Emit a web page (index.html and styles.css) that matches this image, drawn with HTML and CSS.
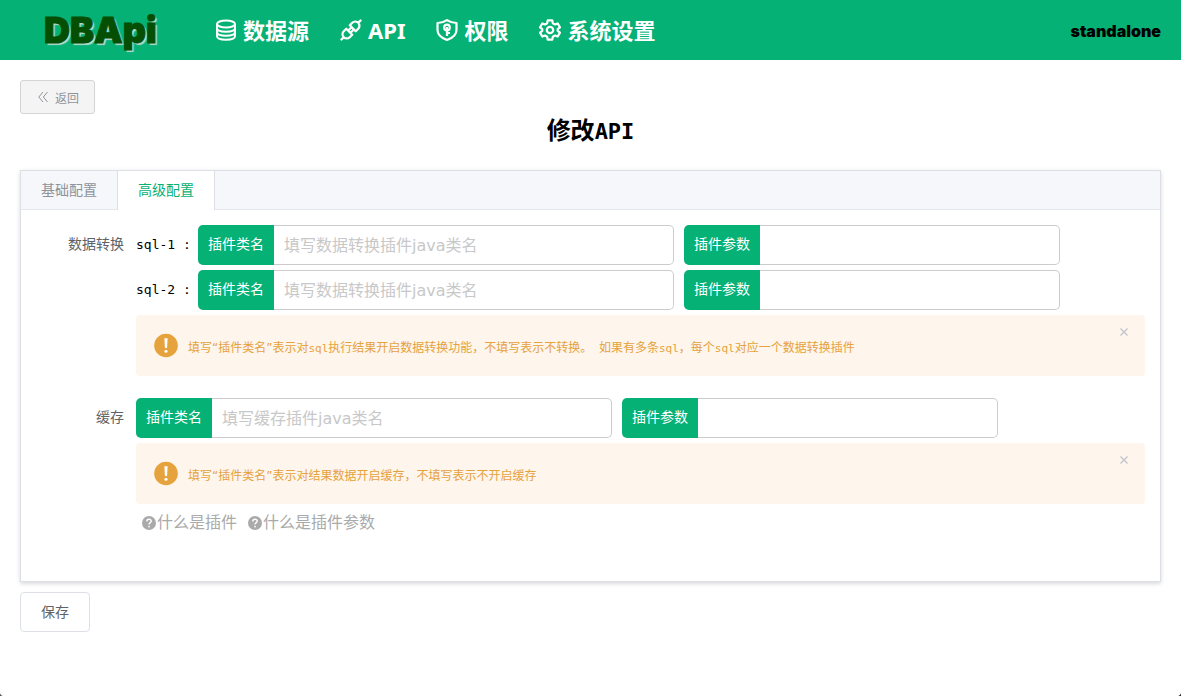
FILE: index.html
```html
<!DOCTYPE html>
<html lang="zh-CN">
<head>
<meta charset="utf-8">
<meta name="viewport" content="width=device-width, initial-scale=1">
<title>DBApi</title>
<link rel="stylesheet" href="styles.css">
</head>
<body>
<header class="topbar">
  <div class="logo">DBApi</div>
  <nav class="nav">
    <a href="#" class="nav-item">
      <svg class="nav-icon" viewBox="0 0 22 22" fill="none" stroke="currentColor" stroke-width="2"><ellipse cx="11" cy="5" rx="9" ry="3.600"/><path d="M2 5v12c0 5 18 5 18 0V5M2 9c0 5 18 5 18 0M2 13c0 5 18 5 18 0"/></svg>
      <span>数据源</span>
    </a>
    <a href="#" class="nav-item">
      <svg class="nav-icon" viewBox="0 0 22 22" fill="none" stroke="currentColor" stroke-width="2.300" stroke-linecap="round" stroke-linejoin="round"><g transform="rotate(-45 11 11)"><path d="M-2.500 11H.5M21.500 11h3M8.500 6.800v8.400H5a4.200 4.200 0 0 1 0-8.400zM13.500 6.800v8.400H17a4.200 4.200 0 0 0 0-8.400zM9 9.400h4M9 12.600h4"/></g></svg>
      <span>API</span>
    </a>
    <a href="#" class="nav-item">
      <svg class="nav-icon" viewBox="0 0 22 22" fill="none" stroke="currentColor" stroke-width="2.200"><path d="M11 1.200c3 2 6 2.800 9.500 2.800v7c0 5-4 8-9.500 10C5.500 19 1.500 16 1.500 11V4C5 4 8 3.200 11 1.200z" stroke-linejoin="round"/><circle cx="11" cy="8.500" r="2.800"/><path d="M11 8v9M11 14h3"/></svg>
      <span>权限</span>
    </a>
    <a href="#" class="nav-item">
      <svg class="nav-icon" viewBox="0 0 24 24" fill="none" stroke="currentColor" stroke-width="2.400" stroke-linejoin="round"><path d="M9.500 1.500h5l.6 3.200 2.300 1.300 3-1.100 2.500 4.200-2.500 2v1.800l2.500 2-2.500 4.200-3-1.100-2.300 1.300-.6 3.200h-5l-.6-3.200L6.600 18l-3 1.100-2.500-4.200 2.500-2v-1.800l-2.500-2 2.500-4.200 3 1.100 2.300-1.300z"/><circle cx="12" cy="12" r="3.500"/></svg>
      <span>系统设置</span>
    </a>
  </nav>
  <div class="mode">standalone</div>
</header>

<main class="page">
  <button type="button" class="back-btn">
    <svg class="back-icon" viewBox="0 0 10 10" fill="none" stroke="currentColor"><path d="M5 0L.8 5 5 10M9.500 0L5.300 5l4.200 5"/></svg>
    <span>返回</span>
  </button>
  <h2 class="title">修改<span class="title-latin">API</span></h2>

  <section class="tabs">
    <div class="tab-bar" role="tablist">
      <button type="button" role="tab" class="tab" aria-selected="false">基础配置</button>
      <button type="button" role="tab" class="tab tab-active" aria-selected="true">高级配置</button>
    </div>
    <div class="tab-body">
      <div class="form-item">
        <div class="form-label">数据转换</div>
        <div class="form-content">
          <div class="plugin-row">
            <span class="sql-name">sql-1 :</span>
            <div class="field field-class"><label class="field-label" for="class1">插件类名</label><input class="field-input" id="class1" type="text" placeholder="填写数据转换插件java类名"></div>
            <div class="field field-param"><label class="field-label" for="param1">插件参数</label><input class="field-input" id="param1" type="text"></div>
          </div>
          <div class="plugin-row">
            <span class="sql-name">sql-2 :</span>
            <div class="field field-class"><label class="field-label" for="class2">插件类名</label><input class="field-input" id="class2" type="text" placeholder="填写数据转换插件java类名"></div>
            <div class="field field-param"><label class="field-label" for="param2">插件参数</label><input class="field-input" id="param2" type="text"></div>
          </div>
          <div class="alert">
            <svg class="alert-icon" viewBox="0 0 25 25"><circle cx="12.500" cy="12.500" r="12.300" fill="currentColor"/><path d="M10.800 5h3.400l-.6 10h-2.200z" fill="#fff"/><circle cx="12.500" cy="18.500" r="1.600" fill="#fff"/></svg>
            <p class="alert-text">填写“插件类名”表示对<span class="mono">sql</span>执行结果开启数据转换功能，不填写表示不转换。<span class="mono"> </span>如果有多条<span class="mono">sql</span>，每个<span class="mono">sql</span>对应一个数据转换插件</p>
            <button type="button" class="alert-close" aria-label="关闭"><svg class="close-icon" viewBox="0 0 8 8" fill="none" stroke="currentColor" stroke-width="1.300"><path d="M.5.5l7 7M7.500.5l-7 7"/></svg></button>
          </div>
        </div>
      </div>

      <div class="form-item">
        <div class="form-label">缓存</div>
        <div class="form-content">
          <div class="plugin-row">
            <div class="field field-class"><label class="field-label" for="class3">插件类名</label><input class="field-input" id="class3" type="text" placeholder="填写缓存插件java类名"></div>
            <div class="field field-param"><label class="field-label" for="param3">插件参数</label><input class="field-input" id="param3" type="text"></div>
          </div>
          <div class="alert">
            <svg class="alert-icon" viewBox="0 0 25 25"><circle cx="12.500" cy="12.500" r="12.300" fill="currentColor"/><path d="M10.800 5h3.400l-.6 10h-2.200z" fill="#fff"/><circle cx="12.500" cy="18.500" r="1.600" fill="#fff"/></svg>
            <p class="alert-text">填写“插件类名”表示对结果数据开启缓存，不填写表示不开启缓存</p>
            <button type="button" class="alert-close" aria-label="关闭"><svg class="close-icon" viewBox="0 0 8 8" fill="none" stroke="currentColor" stroke-width="1.300"><path d="M.5.5l7 7M7.500.5l-7 7"/></svg></button>
          </div>
          <div class="help-links">
            <a href="#" class="help-link"><svg class="help-icon" viewBox="0 0 14 14"><circle cx="7" cy="7" r="7" fill="currentColor"/><path d="M4.900 5.400c0-2.800 4.300-2.700 4.300-.2C9.200 6.700 7 6.700 7 8.500" fill="none" stroke="#fff" stroke-width="1.400"/><circle cx="7" cy="10.600" r=".9" fill="#fff"/></svg>什么是插件</a>
            <a href="#" class="help-link"><svg class="help-icon" viewBox="0 0 14 14"><circle cx="7" cy="7" r="7" fill="currentColor"/><path d="M4.900 5.400c0-2.800 4.300-2.700 4.300-.2C9.200 6.700 7 6.700 7 8.500" fill="none" stroke="#fff" stroke-width="1.400"/><circle cx="7" cy="10.600" r=".9" fill="#fff"/></svg>什么是插件参数</a>
          </div>
        </div>
      </div>
    </div>
  </section>

  <button type="button" class="save-btn">保存</button>
</main>
</body>
</html>
```

FILE: styles.css
```css
* {
  box-sizing: border-box;
}

body {
  margin: 0;
  background: #fff;
  color: #000;
  font-family: "DejaVu Sans", "Noto Sans CJK SC", sans-serif;
  font-size: 14px;
}

/* rounded bottom corners of the window */
body::before,
body::after {
  content: "";
  position: fixed;
  bottom: 0;
  width: 5px;
  height: 5px;
}

body::before {
  left: 0;
  background: radial-gradient(circle at 100% 0, transparent 5px, #555 6px);
}

body::after {
  right: 0;
  background: radial-gradient(circle at 0 0, transparent 5px, #222 6px);
}

button,
input {
  font-family: inherit;
}

button {
  cursor: pointer;
}

svg {
  display: block;
  flex: none;
}

.topbar {
  display: flex;
  align-items: center;
  height: 60px;
  padding: 0 20px 0 44px;
  background: #06b176;
}

.logo {
  width: 171px;
  color: #054f05;
  font-family: Inter, sans-serif;
  font-size: 36px;
  font-weight: 900;
  line-height: 60px;
  -webkit-text-stroke: 1px #054f05;
  text-shadow: 2px 2px 1px #b4dccb;
}

.nav {
  display: flex;
  gap: 31px;
}

.nav-item {
  display: flex;
  align-items: center;
  gap: 6px;
  color: #fff;
  font-family: "Noto Sans", "Noto Sans CJK SC", sans-serif;
  font-size: 22px;
  font-weight: bold;
  line-height: 58px;
  text-decoration: none;
}

.nav-icon {
  width: 22px;
  height: 22px;
}

.mode {
  margin-left: auto;
  padding-top: 2px;
  font-family: Inter, sans-serif;
  font-size: 16px;
  font-weight: 900;
  line-height: 58px;
}

.page {
  padding: 20px;
}

.back-btn {
  display: flex;
  align-items: center;
  gap: 7px;
  height: 34px;
  padding: 0 15px 0 17px;
  border: 1px solid #d3d4d6;
  border-radius: 3px;
  background: #f4f4f5;
  color: #909399;
  font-size: 12px;
}

.back-icon {
  width: 10px;
  height: 10px;
}

.title {
  margin: 0;
  padding: 1px 0 22px;
  font-size: 24px;
  line-height: 33px;
  text-align: center;
}

.title-latin {
  font-family: "DejaVu Sans Mono", monospace;
  font-size: 22px;
}

.tabs {
  border: 1px solid #dcdfe6;
  background: #fff;
  box-shadow: 0 2px 4px rgba(0, 0, 0, 0.12), 0 0 6px rgba(0, 0, 0, 0.04);
}

.tab-bar {
  display: flex;
  height: 39px;
  border-bottom: 1px solid #e4e7ed;
  background: #f5f7fa;
}

.tab {
  height: 39px;
  padding: 0 20px 4px;
  border: 0;
  background: none;
  color: #909399;
  font-size: 14px;
}

.tab-active {
  border-right: 1px solid #dcdfe6;
  border-left: 1px solid #dcdfe6;
  background: #fff;
  color: #06b176;
}

.tab-body {
  padding: 15px 15px 22px;
}

.form-item {
  display: flex;
  margin-bottom: 22px;
}

.form-label {
  flex: none;
  width: 100px;
  padding-right: 12px;
  color: #606266;
  line-height: 38px;
  text-align: right;
}

.form-content {
  flex: 1;
  min-width: 0;
}

.plugin-row {
  display: flex;
  gap: 10px;
  margin-bottom: 5px;
}

.sql-name {
  flex: none;
  width: 52px;
  font-family: "DejaVu Sans Mono", monospace;
  font-size: 13px;
  line-height: 40px;
  white-space: nowrap;
}

.field {
  display: flex;
  height: 40px;
}

.field-class {
  flex: 0 1 476px;
}

.field-param {
  flex: 0 1 376px;
}

.field-label {
  flex: none;
  padding: 0 10px;
  border-radius: 5px 0 0 5px;
  background: #06b176;
  color: #fff;
  line-height: 38px;
}

.field-input {
  flex: 1;
  min-width: 0;
  padding: 0 10px;
  border: 1px solid #ccc;
  border-left: 0;
  border-radius: 0 5px 5px 0;
  background: #fff;
  font-size: 16px;
  outline: none;
}

.field-input::placeholder {
  color: #c8c8c8;
}

.alert {
  display: flex;
  align-items: center;
  height: 61px;
  padding: 0 16px 0 18px;
  border-radius: 4px;
  background: #fef5ec;
  color: #e6a23c;
}

.alert-icon {
  width: 24px;
  height: 25px;
}

.alert-text {
  flex: 1;
  margin: 5px 10px 0;
  font-size: 12px;
  line-height: 18px;
}

.mono {
  font-family: "DejaVu Sans Mono", monospace;
  font-size: 11px;
  white-space: pre;
}

.alert-close {
  align-self: flex-start;
  margin-top: 12px;
  padding: 1px;
  border: 0;
  background: none;
  color: #c0c4cc;
}

.close-icon {
  width: 8px;
  height: 8px;
}

.help-links {
  display: flex;
  gap: 11px;
  padding: 4px 6px 0;
}

.help-link {
  display: flex;
  align-items: center;
  gap: 1px;
  color: #aaa;
  font-size: 16px;
  line-height: 29px;
  text-decoration: none;
}

.help-icon {
  width: 14px;
  height: 14px;
}

.save-btn {
  height: 40px;
  margin-top: 10px;
  padding: 0 20px 2px;
  border: 1px solid #dcdfe6;
  border-radius: 4px;
  background: #fff;
  color: #606266;
  font-size: 14px;
}
```
